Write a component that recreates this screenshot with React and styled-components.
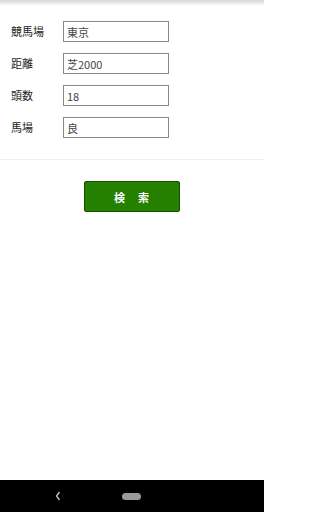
import React, { useState } from 'react';
import styled, { createGlobalStyle } from 'styled-components';

const GlobalStyle = createGlobalStyle`
  html, body {
    margin: 0;
    padding: 0;
    background: #fff;
  }
  body {
    font-family: "Noto Sans CJK JP", "Noto Sans", sans-serif;
  }
`;

const Screen = styled.div`
  display: flex;
  flex-direction: column;
  width: 264px;
  height: 512px;
  background: #fff;
  overflow: hidden;
`;

const TopShade = styled.div`
  height: 6px;
  background: linear-gradient(#d6d6d6, #ffffff);
  flex-shrink: 0;
`;

const Form = styled.div`
  display: flex;
  flex-direction: column;
  gap: 11px;
  padding: 15px 0 21px 11px;
  border-bottom: 1px solid #eeeeee;
`;

const Row = styled.div`
  display: flex;
  align-items: center;
  height: 21px;
`;

const Label = styled.label`
  width: 52px;
  font-size: 11px;
  color: #222;
  line-height: 21px;
`;

const Field = styled.input`
  box-sizing: border-box;
  width: 106px;
  height: 21px;
  margin: 0;
  padding: 0 3px;
  border: 1px solid #8a8a8a;
  border-radius: 0;
  font-family: "Noto Sans CJK JP", "Noto Sans", sans-serif;
  font-size: 11px;
  color: #444;
  background: #fff;
  outline: none;
`;

const Actions = styled.div`
  display: flex;
  justify-content: center;
  padding-top: 21px;
`;

const SearchButton = styled.button`
  width: 96px;
  height: 31px;
  background: #268000;
  border: 1px solid #174f00;
  border-radius: 2px;
  color: #fff;
  font-family: "Noto Sans CJK JP", "Noto Sans", sans-serif;
  font-size: 11px;
  font-weight: bold;
  letter-spacing: 1px;
  cursor: pointer;
`;

const Spacer = styled.div`
  flex: 1;
`;

const NavBar = styled.div`
  height: 32px;
  background: #000;
  display: flex;
  align-items: center;
  flex-shrink: 0;
  padding-left: 55px;
  gap: 61px;
`;

const Pill = styled.div`
  width: 19px;
  height: 7px;
  border-radius: 4px;
  background: #9a9a9a;
`;

const fields = [
  { label: '競馬場', value: '東京' },
  { label: '距離', value: '芝2000' },
  { label: '頭数', value: '18' },
  { label: '馬場', value: '良' },
];

const App = () => {
  const [values, setValues] = useState(fields.map(f => f.value));

  const update = (index, value) => {
    const next = values.slice();
    next[index] = value;
    setValues(next);
  };

  return (
    <>
      <GlobalStyle />
      <Screen>
        <TopShade />
        <Form>
          {fields.map((f, i) => (
            <Row key={f.label}>
              <Label>{f.label}</Label>
              <Field value={values[i]} onChange={e => update(i, e.target.value)} />
            </Row>
          ))}
        </Form>
        <Actions>
          <SearchButton>検　索</SearchButton>
        </Actions>
        <Spacer />
        <NavBar>
          <svg width="6" height="10" viewBox="0 0 6 10">
            <path d="M4.5 1 L1.5 5 L4.5 9" stroke="#bdbdbd" strokeWidth="1.4" fill="none" />
          </svg>
          <Pill />
        </NavBar>
      </Screen>
    </>
  );
};

export default App;
